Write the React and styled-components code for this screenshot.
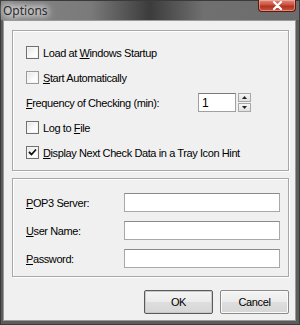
import React from "react";
import styled, { createGlobalStyle } from "styled-components";

const GlobalStyle = createGlobalStyle`
  html, body {
    margin: 0;
    padding: 0;
    background: #5c5c5c;
  }
  body {
    font-family: "Liberation Sans", Arial, sans-serif;
  }
`;

export default function App() {
  return (
    <>
      <GlobalStyle />
      <Window>
        <TitleBar>
          <Title>Options</Title>
          <CloseButton>
            <svg width="11" height="9" viewBox="0 0 11 9">
              <path d="M2 1 L9 8 M9 1 L2 8" stroke="#fff" strokeWidth="2.2" strokeLinecap="round" />
            </svg>
          </CloseButton>
        </TitleBar>
        <Client>
          <Panel $top={9} $bottom={5}>
            <Row>
              <Checkbox />
              <Label>Load at <u>W</u>indows Startup</Label>
            </Row>
            <Row>
              <Checkbox $dim />
              <Label><u>S</u>tart Automatically</Label>
            </Row>
            <Row>
              <FreqLabel><u>F</u>requency of Checking (min):</FreqLabel>
              <SpinInput>1</SpinInput>
              <SpinButtons>
                <SpinButton>
                  <svg width="5" height="3" viewBox="0 0 5 3"><path d="M0 3 L2.5 0 L5 3 Z" fill="#222" /></svg>
                </SpinButton>
                <SpinButton>
                  <svg width="5" height="3" viewBox="0 0 5 3"><path d="M0 0 L2.5 3 L5 0 Z" fill="#222" /></svg>
                </SpinButton>
              </SpinButtons>
            </Row>
            <Row>
              <Checkbox />
              <Label>Log to <u>F</u>ile</Label>
            </Row>
            <Row>
              <Checkbox>
                <svg width="9" height="9" viewBox="0 0 9 9">
                  <path d="M1 4 L3.5 6.5 L8 1.5" stroke="#111" strokeWidth="1.8" fill="none" />
                </svg>
              </Checkbox>
              <Label><u>D</u>isplay Next Check Data in a Tray Icon Hint</Label>
            </Row>
          </Panel>
          <Panel $top={14} $bottom={8} $gap={9}>
            <FieldRow>
              <FieldLabel><u>P</u>OP3 Server:</FieldLabel>
              <TextBox />
            </FieldRow>
            <FieldRow>
              <FieldLabel><u>U</u>ser Name:</FieldLabel>
              <TextBox />
            </FieldRow>
            <FieldRow>
              <FieldLabel><u>P</u>assword:</FieldLabel>
              <TextBox />
            </FieldRow>
          </Panel>
          <ButtonBar>
            <Button $default>OK</Button>
            <Button>Cancel</Button>
          </ButtonBar>
        </Client>
      </Window>
    </>
  );
}

const Window = styled.div`
  width: 300px;
  height: 325px;
  box-sizing: border-box;
  display: flex;
  flex-direction: column;
  background: #5c5c5c;
  border: 1px solid #3a3a3a;
`;

const TitleBar = styled.div`
  height: 19px;
  display: flex;
  align-items: flex-start;
  padding: 0 2px 0 2px;
  background: linear-gradient(
    to right,
    #858585 0%,
    #7a7a7a 30%,
    #3c3c3c 50%,
    #707070 68%,
    #6c6c6c 100%
  );
`;

const Title = styled.div`
  font-family: "Noto Sans", "Liberation Sans", sans-serif;
  font-size: 12px;
  color: #2c2c2c;
  padding-top: 1px;
  text-shadow: 0 0 6px #fff, 0 0 8px #fff, 0 0 10px #eee;
`;

const CloseButton = styled.div`
  margin-left: auto;
  margin-right: 1px;
  width: 38px;
  height: 12px;
  margin-top: -1px;
  box-sizing: border-box;
  display: flex;
  align-items: center;
  justify-content: center;
  border: 1px solid #5a1a12;
  border-top: none;
  border-radius: 0 0 4px 4px;
  background: linear-gradient(to bottom, #e08a7c 0%, #c8503e 45%, #b03220 55%, #c9553c 100%);
  box-shadow: inset 0 0 0 1px rgba(255, 200, 190, 0.5);
`;

const Client = styled.div`
  flex: 1;
  margin: 0 3px 3px 2px;
  display: flex;
  flex-direction: column;
  gap: 7px;
  padding: 9px 6px 0 8px;
  background: #f0f0f0;
  border: 1px solid #9a9a9a;
  letter-spacing: -0.4px;
`;

const Panel = styled.div`
  display: flex;
  flex-direction: column;
  gap: ${(p) => p.$gap || 0}px;
  padding: ${(p) => p.$top}px 8px ${(p) => p.$bottom}px 13px;
  border: 1px solid #a8a8a8;
  box-shadow: inset 1px 1px 0 #fff, 1px 1px 0 #fff;
`;

const Row = styled.div`
  height: 25px;
  display: flex;
  align-items: center;
  font-size: 11px;
  color: #000;
`;

const Checkbox = styled.div`
  width: 13px;
  height: 13px;
  box-sizing: border-box;
  margin-right: 4px;
  display: flex;
  align-items: center;
  justify-content: center;
  border: 1px solid ${(p) => (p.$dim ? "#9a9a9a" : "#707070")};
  background: linear-gradient(135deg, #e4e4e4 0%, #fbfbfb 60%, #fff 100%);
  box-shadow: inset 0 0 0 1px #f4f4f4;
`;

const Label = styled.span`
  white-space: nowrap;
`;

const FreqLabel = styled.span`
  width: 172px;
  white-space: nowrap;
`;

const SpinInput = styled.div`
  width: 38px;
  height: 19px;
  box-sizing: border-box;
  padding: 2px 0 0 3px;
  font-size: 12px;
  background: #fff;
  border: 1px solid #a0a0a0;
  border-top-color: #7a7a7a;
`;

const SpinButtons = styled.div`
  display: flex;
  flex-direction: column;
  gap: 1px;
  margin-left: 2px;
`;

const SpinButton = styled.div`
  width: 13px;
  height: 9px;
  box-sizing: border-box;
  display: flex;
  align-items: center;
  justify-content: center;
  border: 1px solid #a8a8a8;
  background: linear-gradient(to bottom, #f6f6f6, #e0e0e0);
`;

const FieldRow = styled.div`
  display: flex;
  align-items: center;
  font-size: 11px;
`;

const FieldLabel = styled.span`
  width: 98px;
  white-space: nowrap;
`;

const TextBox = styled.div`
  flex: 1;
  height: 19px;
  box-sizing: border-box;
  background: #fff;
  border: 1px solid #a8a8a8;
  border-top-color: #8a8a8a;
`;

const ButtonBar = styled.div`
  display: flex;
  justify-content: flex-end;
  gap: 7px;
  margin-top: 6px;
`;

const Button = styled.div`
  width: 69px;
  height: 24px;
  box-sizing: border-box;
  display: flex;
  align-items: center;
  justify-content: center;
  font-size: 11px;
  color: #000;
  border: 1px solid ${(p) => (p.$default ? "#5a5a5a" : "#8a8a8a")};
  border-radius: 2px;
  background: linear-gradient(to bottom, #f4f4f4 0%, #ebebeb 50%, #dedede 51%, #d6d6d6 100%);
  box-shadow: ${(p) => (p.$default ? "inset 0 0 0 1px #c8c8c8" : "inset 0 0 0 1px #fafafa")};
`;
